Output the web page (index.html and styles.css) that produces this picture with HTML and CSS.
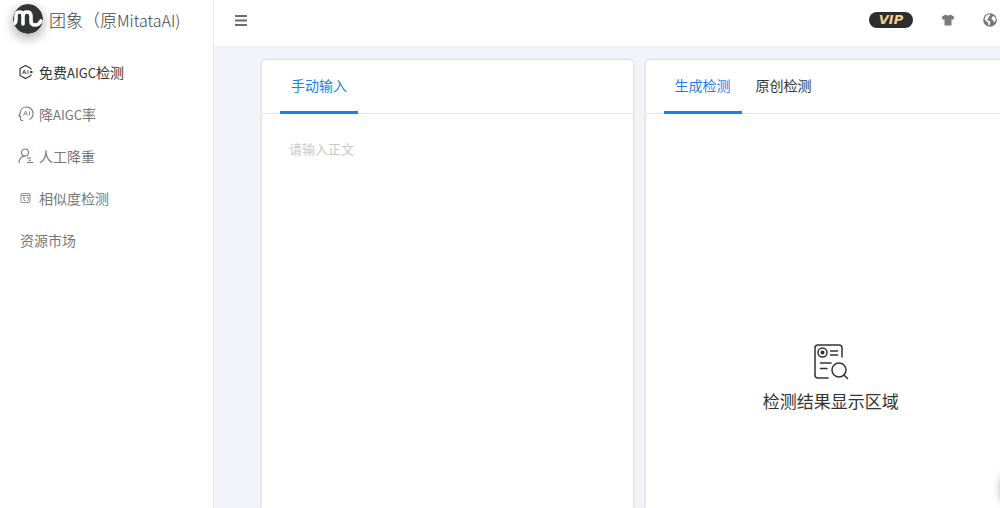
FILE: index.html
```html
<!DOCTYPE html>
<html lang="zh-CN">
<head>
    <meta charset="UTF-8">
    <meta name="viewport" content="width=device-width, initial-scale=1.0">
    <title>团象（原MitataAI)</title>
    <link rel="stylesheet" href="styles.css">
</head>
<body>

    <div class="app">
        <aside class="sidebar">
            <a href="#" class="brand">
                <svg class="logo" viewBox="0 0 30 30">
                    <circle cx="15" cy="15" r="15" fill="#333436"/>
                    <path d="M0.500 19.500C2.500 19.500 3 18 3 15V12C3 8.500 4.500 8 6.500 8C9 8 10 9 10 12V20M10 12C10 9 11.500 8 14 8C17 8 18 9.500 18 12V17C18 20 19.500 21 22 21C25 21 26.500 20 28 17" fill="none" stroke="#fff" stroke-width="3.600" stroke-linecap="round" stroke-linejoin="round"/>
                </svg>
                <span>团象（原<span class="latin">MitataAI)</span></span>
            </a>
            <nav class="menu">
                <a href="#" class="active">
                    <svg class="icon" viewBox="0 0 16 16">
                        <path d="M13 5.500V4.500L7.500 1.500L2 4.500V11.500L7.500 14.500L13 11.500V10.500" />
                        <path class="thin" d="M4.500 10L6.300 6L8.100 10M5.200 8.800H7.400M10 6V10" />
                        <circle cx="13.300" cy="8" r="0.800" />
                    </svg>
                    <span>免费<span class="latin">AIGC</span>检测</span>
                </a>
                <a href="#">
                    <svg class="icon" viewBox="0 0 16 16">
                        <path d="M5 14.500H4Q2.500 14.500 2.500 12.500V10.500L0.800 10L2.300 7C2.500 3.500 5 1 8.500 1C12.500 1 15 4 15 7.500C15 10.500 13.500 12.500 11.500 13.500" />
                        <path class="thin" d="M5.500 9.500L7.500 5L9.500 9.500M6.300 8H8.700M11.500 5V9.500" />
                    </svg>
                    <span>降<span class="latin">AIGC</span>率</span>
                </a>
                <a href="#">
                    <svg class="icon" viewBox="0 0 16 16">
                        <circle cx="7" cy="4.500" r="3.500" />
                        <path d="M1 15C1 11.500 3 8.500 7 8M9 10H13M10.500 12.300H13M9 14.500H15" />
                    </svg>
                    <span>人工降重</span>
                </a>
                <a href="#">
                    <svg class="icon" viewBox="0 0 16 16">
                        <rect class="thin" x="3" y="3.500" width="9" height="9" rx="1" />
                        <path class="thin" d="M3 5.500H12M5 7.500H7M6 7.500V10.500H7.500M8.500 7.500H10.500V9.500Q10.500 10.500 9 10.500" />
                    </svg>
                    <span>相似度检测</span>
                </a>
                <a href="#" class="plain">资源市场</a>
            </nav>
        </aside>

        <div class="main">
            <header class="topbar">
                <button class="icon-btn" aria-label="菜单">
                    <svg width="14" height="14" viewBox="0 0 14 14">
                        <path d="M1 3H13M1 7.500H13M1 12H13" fill="none" stroke="#6b6b6b" stroke-width="1.800"/>
                    </svg>
                </button>
                <div class="tools">
                    <a href="#" class="vip">VIP</a>
                    <button class="icon-btn" aria-label="主题">
                        <svg width="14" height="14" viewBox="0 0 14 14">
                            <path d="M4.500 1.500Q7 3.500 9.500 1.500L13.500 4L12 7L10.500 6.500V12.500H3.500V6.500L2 7L0.500 4Z" fill="#7b7b7b"/>
                        </svg>
                    </button>
                    <button class="icon-btn" aria-label="语言">
                        <svg width="14" height="14" viewBox="0 0 14 14">
                            <circle cx="7" cy="7" r="6.800" fill="#777"/>
                            <path d="M1.500 6L3 2.800L6 1.300L7.500 2L6 3.500L5 5L5.500 6.500L3.500 6.300L4.500 7.500L6.500 8L7.500 9L6.300 12.500L5.300 12L5 9.500L2.800 8ZM9 4L11 3L12.700 6L12 9L10.500 8.500L10 7L8.500 6Z" fill="#fff"/>
                        </svg>
                    </button>
                </div>
            </header>

            <main class="content">
                <section class="card">
                    <div class="tabs">
                        <button class="tab active">手动输入</button>
                    </div>
                    <textarea class="editor" placeholder="请输入正文" aria-label="正文"></textarea>
                </section>

                <section class="card">
                    <div class="tabs">
                        <button class="tab active">生成检测</button>
                        <button class="tab">原创检测</button>
                    </div>
                    <div class="empty">
                        <svg width="36" height="36" viewBox="0 0 36 36" fill="none" stroke="#333" stroke-width="1.500" stroke-linecap="round">
                            <path d="M15 34H5Q2 34 2 31V4Q2 1 5 1H26Q29 1 29 4V13" />
                            <circle cx="9.500" cy="8.500" r="4.500" />
                            <circle cx="9.500" cy="8.500" r="1.300" fill="#333" />
                            <path d="M17.500 7H24.500M17.500 11H24.500M7.500 19H18M7.500 24.500H14" />
                            <circle cx="26" cy="26" r="7" />
                            <path d="M31 31L34.500 34.500" />
                        </svg>
                        <p>检测结果显示区域</p>
                    </div>
                </section>
            </main>
        </div>
    </div>

    <button class="service" aria-label="客服"></button>

</body>
</html>
```
FILE: styles.css
```css
* {
    margin: 0;
    padding: 0;
    box-sizing: border-box;
}

body {
    font-family: "Noto Sans CJK SC", sans-serif;
    font-size: 14px;
    color: #333;
    background: #f3f4f9;
    overflow: hidden;
}

a {
    color: inherit;
    text-decoration: none;
}

button {
    font: inherit;
    color: inherit;
    background: none;
    border: none;
    cursor: pointer;
}

.app {
    display: flex;
    min-width: 1064px;
    height: 100vh;
}

/* sidebar */
.sidebar {
    width: 214px;
    flex-shrink: 0;
    background: #fff;
    border-right: 1px solid #e9e9ec;
}

.brand {
    display: flex;
    align-items: center;
    gap: 6px;
    height: 46px;
    padding: 0 0 8px 13px;
    font-size: 17px;
    font-weight: 300;
    color: #444;
    overflow: hidden;
    white-space: nowrap;
}

.brand .latin {
    font-size: 16px;
}

.logo {
    width: 30px;
    height: 30px;
    flex-shrink: 0;
    border-radius: 50%;
    box-shadow: 0 4px 12px rgba(0, 0, 0, 0.35);
}

.menu {
    padding-top: 5px;
}

.menu a {
    display: flex;
    align-items: center;
    gap: 5px;
    height: 42px;
    padding-left: 18px;
    color: #777;
}

.menu a.active {
    color: #333;
}

.menu a.plain {
    padding-left: 20px;
}

.menu .latin {
    font-size: 13px;
}

.icon {
    width: 16px;
    height: 16px;
    fill: none;
    stroke: currentColor;
    stroke-width: 1.1;
}

.thin {
    stroke-width: 0.8;
}

/* top bar */
.main {
    flex: 1;
    display: flex;
    flex-direction: column;
    min-width: 0;
}

.topbar {
    display: flex;
    align-items: center;
    justify-content: space-between;
    height: 46px;
    padding: 0 67px 6px 20px;
    background: #fff;
}

.tools {
    display: flex;
    align-items: center;
    gap: 28px;
}

.icon-btn {
    display: flex;
}

.vip {
    width: 44px;
    height: 16px;
    border-radius: 8px;
    background: #2d2d2f;
    color: #f3cf94;
    font: italic bold 13px/16px "DejaVu Sans", sans-serif;
    text-align: center;
}

/* panels */
.content {
    flex: 1;
    display: grid;
    grid-template-columns: 1fr 1fr;
    gap: 13px;
    padding: 14px 48px 0;
}

.card {
    display: flex;
    flex-direction: column;
    background: #fff;
    border-radius: 4px 4px 0 0;
    box-shadow: 0 0 3px rgba(0, 0, 0, 0.2);
}

.tabs {
    display: flex;
    height: 54px;
    padding-left: 18px;
    border-bottom: 1px solid #e8e8e8;
}

.tab {
    height: 54px;
    padding: 0 11px 2px;
    margin-right: 3px;
    border-bottom: 3px solid transparent;
}

.tab.active {
    color: #1a7fe8;
    border-bottom-color: #1a7fe8;
}

.editor {
    flex: 1;
    padding: 25px 27px;
    border: none;
    outline: none;
    resize: none;
    background: none;
    font: inherit;
    font-size: 13px;
    line-height: 20px;
}

.editor::placeholder {
    color: #c8c8c8;
}

.empty {
    flex: 1;
    display: flex;
    flex-direction: column;
    align-items: center;
    justify-content: flex-end;
    gap: 8px;
    padding-bottom: 94px;
    font-size: 17px;
    line-height: 26px;
}

/* floating button on the right edge */
.service {
    position: fixed;
    right: -48px;
    bottom: -4px;
    width: 46px;
    height: 46px;
    border-radius: 50%;
    background: #fff;
    box-shadow: 0 0 10px rgba(0, 0, 0, 0.5);
}
```
